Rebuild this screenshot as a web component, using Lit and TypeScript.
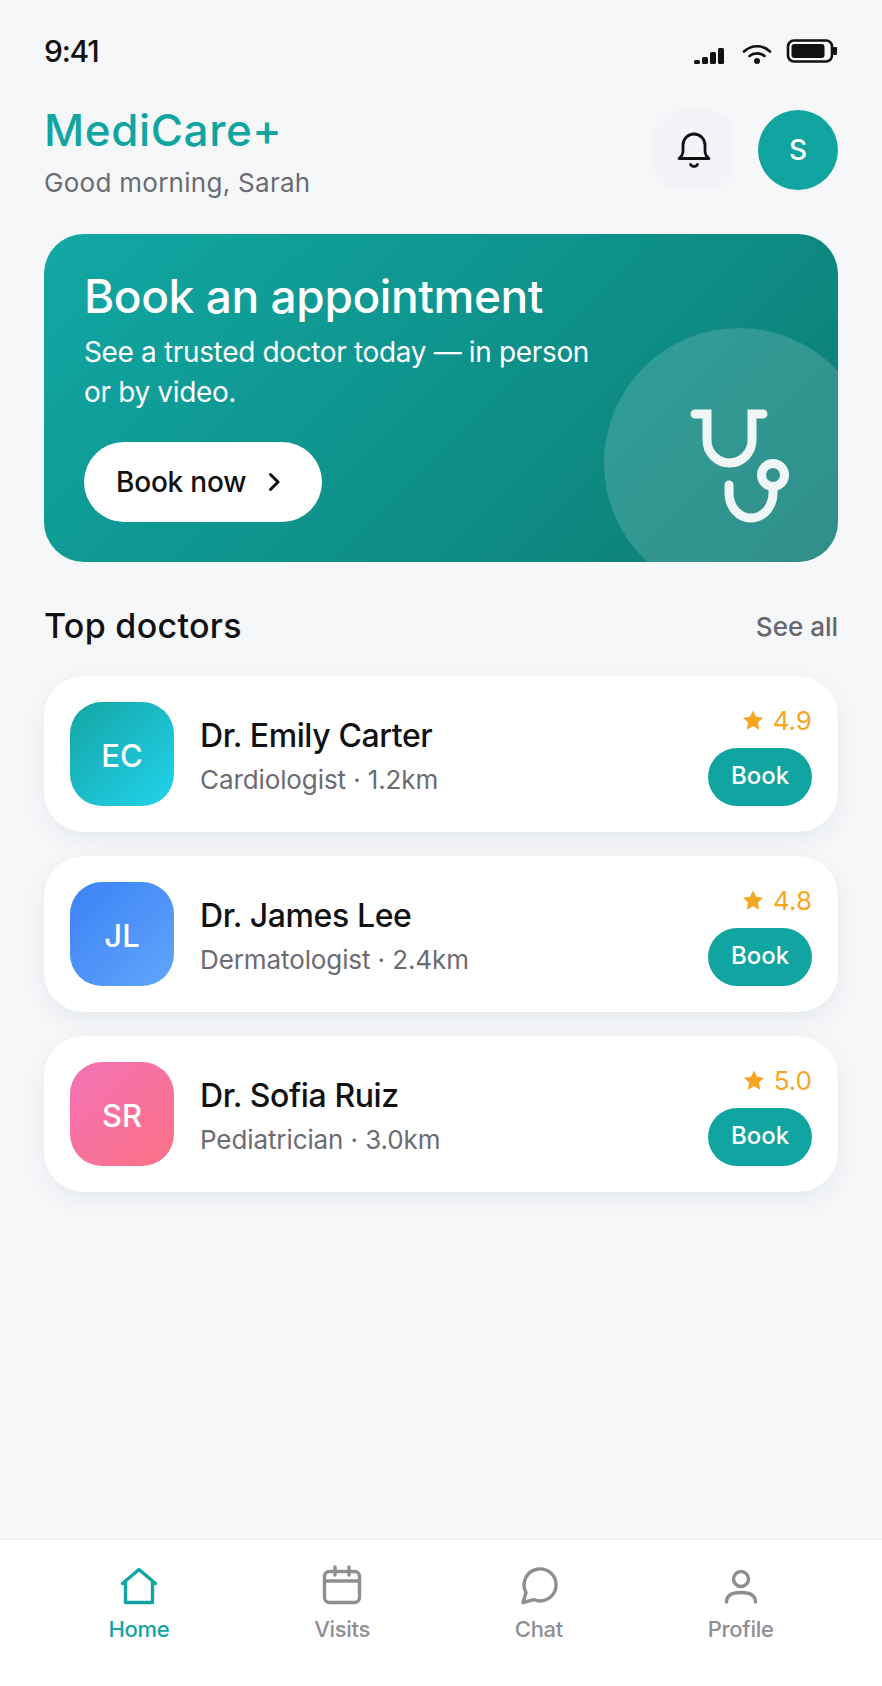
import { LitElement, html, css, svg } from 'lit';
import { customElement } from 'lit/decorators.js';

const doctors = [
  { initials: 'EC', name: 'Dr. Emily Carter', detail: 'Cardiologist · 1.2km', rating: '4.9', tone: 'teal' },
  { initials: 'JL', name: 'Dr. James Lee', detail: 'Dermatologist · 2.4km', rating: '4.8', tone: 'blue' },
  { initials: 'SR', name: 'Dr. Sofia Ruiz', detail: 'Pediatrician · 3.0km', rating: '5.0', tone: 'pink' },
];

const navIcons: Record<string, unknown> = {
  home: svg`<path d="M5.500 19.500 22 5.500l16.500 14M8.500 17v21.500h27V17" />`,
  visits: svg`<rect x="4.500" y="7.500" width="35" height="31" rx="5" /><path d="M4.500 17h35M15 3v8M29 3v8" />`,
  chat: svg`<path d="M9 28.500A16 16 0 1 1 17 35.700L6 38.500Z" />`,
  profile: svg`<circle cx="22" cy="15" r="7.500" /><path d="M7.500 38c0-7 6.500-9.500 14.500-9.500s14.500 2.500 14.500 9.500" />`,
};

const navItems = [
  { id: 'home', label: 'Home', active: true },
  { id: 'visits', label: 'Visits', active: false },
  { id: 'chat', label: 'Chat', active: false },
  { id: 'profile', label: 'Profile', active: false },
];

@customElement('app-root')
export class AppRoot extends LitElement {
  static styles = css`
    :host {
      display: flex;
      flex-direction: column;
      min-height: 1686px;
      background: #f5f7f9;
      font-family: 'Inter', 'Liberation Sans', sans-serif;
      color: #111114;
    }

    .status {
      display: flex;
      justify-content: space-between;
      align-items: flex-start;
      height: 102px;
      box-sizing: border-box;
      padding: 33px 44px 0;
    }

    .time {
      font-size: 30px;
      line-height: 36px;
      font-weight: 500;
      letter-spacing: -1.2px;
    }

    .status-icons {
      display: flex;
      align-items: flex-end;
      height: 31px;
    }

    .signal { margin-right: 18px; }
    .wifi { margin-right: 14px; }
    .battery { margin-bottom: 1px; }

    .header {
      display: flex;
      justify-content: space-between;
      align-items: flex-start;
      padding: 0 44px;
      margin-bottom: 31px;
    }

    .logo {
      font-size: 44px;
      line-height: 56px;
      font-weight: 500;
      color: #11a5a2;
      letter-spacing: 0.6px;
    }

    .greeting {
      margin-top: 5px;
      font-size: 26px;
      line-height: 40px;
      color: #6b6b72;
      letter-spacing: 0.28px;
    }

    .actions {
      display: flex;
      gap: 25px;
      margin-top: 8px;
    }

    .bell {
      display: flex;
      align-items: center;
      justify-content: center;
      width: 79px;
      height: 80px;
      border-radius: 24px;
      background: #f2f4f8;
    }

    .me {
      display: flex;
      align-items: center;
      justify-content: center;
      width: 80px;
      height: 80px;
      border-radius: 50%;
      background: #11a5a2;
      color: #fff;
      font-size: 28px;
      font-weight: 500;
    }

    .hero {
      position: relative;
      overflow: hidden;
      margin: 0 44px;
      height: 328px;
      box-sizing: border-box;
      padding: 32px 40px 40px;
      border-radius: 40px;
      background: linear-gradient(135deg, #11a8a4, #0c7c74);
      color: #fff;
    }

    .hero h1 {
      margin: 0;
      font-size: 46px;
      line-height: 60px;
      font-weight: 500;
      letter-spacing: -0.4px;
    }

    .hero p {
      margin: 6px 0 0;
      width: 520px;
      font-size: 28px;
      line-height: 40px;
      letter-spacing: -0.35px;
    }

    .cta {
      display: flex;
      align-items: center;
      gap: 20px;
      margin-top: 30px;
      height: 80px;
      width: 238px;
      padding-left: 32px;
      box-sizing: border-box;
      border-radius: 40px;
      background: #fff;
      color: #111114;
      font-size: 28px;
      font-weight: 500;
      letter-spacing: -0.2px;
      white-space: nowrap;
    }

    .cta svg { flex: none; }

    .hero-circle {
      position: absolute;
      left: 560px;
      top: 94px;
      width: 270px;
      height: 270px;
      border-radius: 50%;
      background: rgba(255, 255, 255, 0.15);
      display: flex;
      align-items: center;
      justify-content: center;
    }

    .section {
      display: flex;
      justify-content: space-between;
      align-items: center;
      margin: 42px 44px 28px;
      height: 44px;
    }

    .section h2 {
      margin: 0;
      font-size: 34px;
      line-height: 44px;
      font-weight: 500;
      letter-spacing: 0.3px;
    }

    .see-all {
      font-size: 26px;
      font-weight: 500;
      color: #66666c;
    }

    .cards {
      display: flex;
      flex-direction: column;
      gap: 24px;
      margin: 0 44px;
    }

    .card {
      display: flex;
      align-items: center;
      gap: 26px;
      padding: 26px;
      border-radius: 40px;
      background: #fff;
      box-shadow: 0 8px 24px rgba(20, 30, 60, 0.06);
    }

    .avatar {
      flex: none;
      display: flex;
      align-items: center;
      justify-content: center;
      box-sizing: border-box;
      padding-top: 2px;
      width: 104px;
      height: 104px;
      border-radius: 32px;
      color: #fff;
      font-size: 31px;
      font-weight: 500;
    }

    .avatar.teal { background: linear-gradient(135deg, #14a5a3, #22d3ee); }
    .avatar.blue { background: linear-gradient(135deg, #3b82f6, #60a5fa); }
    .avatar.pink { background: linear-gradient(135deg, #f472b6, #fb7185); }

    .info {
      flex: 1;
      padding-top: 6px;
    }

    .name {
      font-size: 32px;
      line-height: 44px;
      font-weight: 500;
      letter-spacing: -0.4px;
    }

    .detail {
      margin-top: 2px;
      font-size: 26px;
      line-height: 40px;
      color: #6b6b72;
      letter-spacing: -0.1px;
    }

    .side {
      display: flex;
      flex-direction: column;
      align-items: flex-end;
      justify-content: space-between;
      height: 104px;
    }

    .rating {
      display: flex;
      align-items: center;
      gap: 9px;
      font-size: 26px;
      line-height: 38px;
      color: #f5a623;
    }

    .rating svg { margin-top: -2px; }

    .book {
      display: flex;
      align-items: center;
      justify-content: center;
      box-sizing: border-box;
      padding-bottom: 3px;
      width: 104px;
      height: 58px;
      border-radius: 29px;
      background: #11a5a2;
      color: #fff;
      font-size: 24px;
      font-weight: 500;
    }

    nav {
      margin-top: auto;
      display: flex;
      justify-content: space-around;
      height: 147px;
      box-sizing: border-box;
      padding: 24px 36px 0;
      background: #fff;
      border-top: 1px solid #eef0f3;
    }

    .tab {
      display: flex;
      flex-direction: column;
      align-items: center;
      gap: 5px;
      font-size: 22px;
      line-height: 32px;
      font-weight: 500;
      letter-spacing: -0.3px;
      color: #8e8e93;
    }

    .tab.active { color: #11a5a2; }

    .tab svg {
      fill: none;
      stroke: currentColor;
      stroke-width: 3.4;
      stroke-linecap: round;
      stroke-linejoin: round;
    }
  `;

  render() {
    return html`
      <div class="status">
        <span class="time">9:41</span>
        <div class="status-icons">
          <svg class="signal" width="30" height="16" viewBox="0 0 30 16" fill="#111">
            <rect x="0" y="12" width="6" height="4" rx="1.500" />
            <rect x="8" y="9" width="6" height="7" rx="1.500" />
            <rect x="16" y="4" width="6" height="12" rx="1.500" />
            <rect x="24" y="0" width="6" height="16" rx="1.500" />
          </svg>
          <svg class="wifi" width="30" height="20" viewBox="0 0 30 20" fill="none" stroke="#111" stroke-width="2.600" stroke-linecap="round">
            <path d="M2 7.500C9.500 .5 20.500 .5 28 7.500" />
            <path d="M7.500 12C11.800 8.500 18.200 8.500 22.500 12" />
            <circle cx="15" cy="17" r="3" fill="#111" stroke="none" />
          </svg>
          <svg class="battery" width="52" height="24" viewBox="0 0 52 24">
            <rect x="2" y="1.500" width="44" height="21" rx="6" fill="none" stroke="#111" stroke-width="2.600" />
            <rect x="5.500" y="5" width="33" height="14" rx="3" fill="#111" />
            <rect x="47" y="8" width="4" height="8" rx="1" fill="#111" />
          </svg>
        </div>
      </div>

      <header class="header">
        <div>
          <div class="logo">MediCare+</div>
          <div class="greeting">Good morning, Sarah</div>
        </div>
        <div class="actions">
          <div class="bell">
            <svg width="44" height="44" viewBox="0 0 44 44" fill="none" stroke="#111" stroke-width="2.800" stroke-linecap="round" stroke-linejoin="round">
              <path d="M7 30.500c2.500-2 4-4 4-7.500v-6a11 11 0 0 1 22 0v6c0 3.500 1.500 5.500 4 7.500z" />
              <path d="M18.500 36.500a4 4 0 0 0 7 0" />
            </svg>
          </div>
          <div class="me">S</div>
        </div>
      </header>

      <section class="hero">
        <h1>Book an appointment</h1>
        <p>See a trusted doctor today — in person or by video.</p>
        <div class="cta">
          Book now
          <svg width="16" height="22" viewBox="0 0 16 22" fill="none" stroke="#111" stroke-width="3" stroke-linecap="round" stroke-linejoin="round">
            <path d="M4.500 3.500l7.500 7.500-7.500 7.500" />
          </svg>
        </div>
        <div class="hero-circle">
          <svg width="120" height="120" viewBox="679 403 120 120" fill="none" stroke="#eef7f6" stroke-width="9" stroke-linecap="round">
            <path d="M695 414h12v26a22.500 23 0 0 0 45 0v-26h11" />
            <circle cx="773" cy="475" r="11.500" />
            <path d="M729 485v8a22 25 0 0 0 44 0v-6" />
          </svg>
        </div>
      </section>

      <div class="section">
        <h2>Top doctors</h2>
        <span class="see-all">See all</span>
      </div>

      <div class="cards">
        ${doctors.map(
          (d) => html`
            <div class="card">
              <div class="avatar ${d.tone}">${d.initials}</div>
              <div class="info">
                <div class="name">${d.name}</div>
                <div class="detail">${d.detail}</div>
              </div>
              <div class="side">
                <div class="rating">
                  <svg width="22" height="22" viewBox="0 0 24 24" fill="#f5a623">
                    <path d="M12 1.500l3.300 7 7.700 1-5.600 5.300 1.400 7.700L12 18.800 5.200 22.500l1.400-7.700L1 9.500l7.700-1z" />
                  </svg>
                  ${d.rating}
                </div>
                <div class="book">Book</div>
              </div>
            </div>
          `,
        )}
      </div>

      <nav>
        ${navItems.map(
          (t) => html`
            <div class="tab ${t.active ? 'active' : ''}">
              <svg width="44" height="44" viewBox="0 0 44 44">${navIcons[t.id]}</svg>
              ${t.label}
            </div>
          `,
        )}
      </nav>
    `;
  }
}
